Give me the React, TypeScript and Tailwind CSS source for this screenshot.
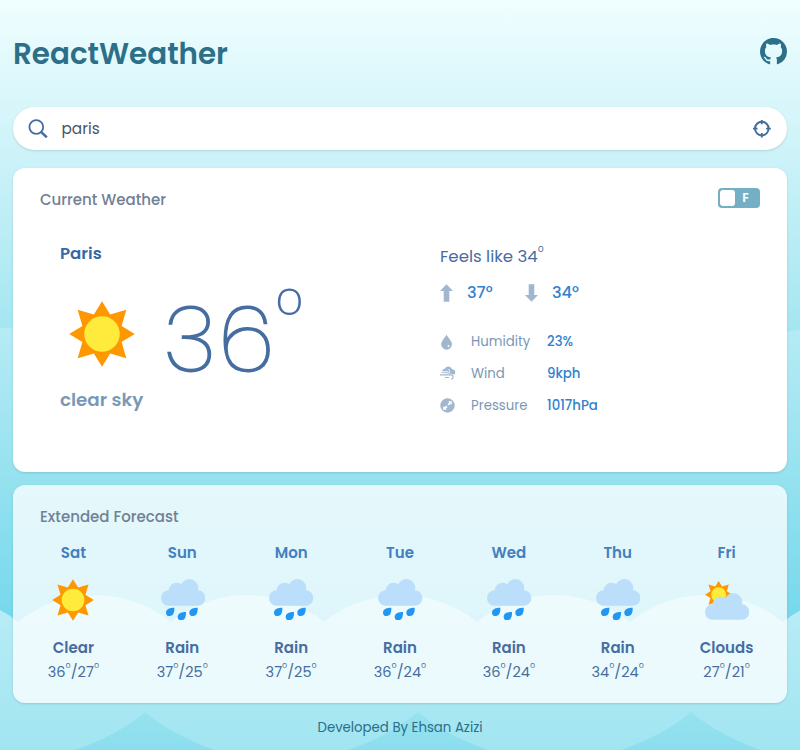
import React from "react";
import { BsGithub } from "react-icons/bs";

function Backdrop() {
  const hills = [8.5 - 273, 8.5, 281.5, 554.5, 827.5];
  const waves = [-58.5, 94.5, 247.5, 400.5, 553.5, 706.5, 859.5];
  return (
    <svg className="absolute inset-0 -z-10" width="800" height="750" viewBox="0 0 800 750" aria-hidden="true">
      <defs>
        <linearGradient id="sky" gradientUnits="userSpaceOnUse" x1="0" y1="0" x2="0" y2="400">
          <stop offset="0" stopColor="#f0feff" />
          <stop offset="1" stopColor="#94e1ee" />
        </linearGradient>
        <linearGradient id="hill" gradientUnits="userSpaceOnUse" x1="0" y1="328" x2="0" y2="620">
          <stop offset="0" stopColor="#b5ebf5" />
          <stop offset="0.5" stopColor="#96e2ef" />
          <stop offset="1" stopColor="#76d8ec" />
        </linearGradient>
        <linearGradient id="wave" gradientUnits="userSpaceOnUse" x1="0" y1="595" x2="0" y2="750">
          <stop offset="0" stopColor="#b9edf6" />
          <stop offset="1" stopColor="#a1e5f1" />
        </linearGradient>
        <linearGradient id="peak" gradientUnits="userSpaceOnUse" x1="0" y1="712" x2="0" y2="750">
          <stop offset="0" stopColor="#97e3ee" />
          <stop offset="1" stopColor="#8bddef" />
        </linearGradient>
      </defs>
      <rect width="800" height="750" fill="url(#sky)" />
      {hills.map((x) => (
        <circle key={x} cx={x} cy="545" r="217" fill="url(#hill)" />
      ))}
      {waves.map((x) => (
        <circle key={x} cx={x} cy="717" r="122" fill="url(#wave)" />
      ))}
      {[145, 418, 691].map((x) => (
        <path key={x} d={`M${x} 712 q29 24 70 38 h-140 q41 -14 70 -38z`} fill="url(#peak)" />
      ))}
    </svg>
  );
}

const rays =
  "0,-32.3 8,-19.3 24,-24 19.3,-8 32.3,0 19.3,8 24,24 8,19.3 0,32.3 -8,19.3 -24,24 -19.3,8 -32.3,0 -19.3,-8 -24,-24 -8,-19.3";

function SunShape() {
  return (
    <>
      <polygon points={rays} fill="#ff9800" />
      <circle r="17.5" fill="#ffeb3b" />
    </>
  );
}

function Sun({ size }: { size: number }) {
  return (
    <svg width={size} height={size} viewBox="-32.5 -32.5 65 65">
      <SunShape />
    </svg>
  );
}

function CloudShape() {
  return (
    <g fill="#bbdefb">
      <rect x="26" y="361" width="133" height="46" rx="23" />
      <circle cx="73" cy="362" r="24" />
      <circle cx="111" cy="354" r="27" />
      <rect x="60" y="356" width="70" height="24" />
    </g>
  );
}

function Rain() {
  return (
    <svg width="44.3" height="41" viewBox="26 327 133 123">
      <CloudShape />
      {["translate(0 0)", "translate(35 13)", "translate(70 0)"].map((t) => (
        <path
          key={t}
          transform={t}
          d="M66 413C67 424 64 438 52 438A10.500 10.500 0 0 1 41 428C41 416 54 413 66 413Z"
          fill="#2196f3"
        />
      ))}
    </svg>
  );
}

function PartlyCloudy() {
  return (
    <svg width="44.3" height="39" viewBox="524 331 133 117">
      <g transform="translate(565 372) scale(1.27)">
        <SunShape />
      </g>
      <g transform="translate(498 40)">
        <CloudShape />
      </g>
    </svg>
  );
}

function SearchIcon() {
  return (
    <svg width="20" height="20" viewBox="0 0 20 20" fill="none" stroke="#466da0">
      <circle cx="8.300" cy="8" r="6.900" strokeWidth="1.800" />
      <path d="M12.800 12.600l6 5.800" strokeWidth="2.500" />
    </svg>
  );
}

function LocateIcon() {
  return (
    <svg width="18" height="18" viewBox="0 0 18 18" fill="none" stroke="#466da0">
      <circle cx="8.800" cy="8.600" r="6.800" strokeWidth="2" />
      <path d="M8.800 -.3v4.600M8.800 12.900V17.600M-.1 8.600h4.600M13.100 8.600H17.800" strokeWidth="1.900" />
    </svg>
  );
}

function Arrow({ down = false }: { down?: boolean }) {
  return (
    <svg width="13" height="18" viewBox="0 0 13 18" fill="#a0b7ce" className={down ? "rotate-180" : ""}>
      <path d="M6.500 .3L13 7H9.300v10.700H3.700V7H0z" />
    </svg>
  );
}

function HumidityIcon() {
  return (
    <svg width="14" height="16" viewBox="0 0 14 16">
      <path d="M6.500 .5C7.700 3.500 12 7 12 10.300a5.300 5.300 0 0 1-10.800 0C1.200 7 5.300 3.500 6.500 .5z" fill="#a0b7ce" />
      <circle cx="8.500" cy="12" r="0.900" fill="#fff" />
    </svg>
  );
}

function WindIcon() {
  return (
    <svg width="16" height="15" viewBox="0 0 16 15" className="-ml-[0.500px]">
      <path
        d="M2.300 5.200C2.300 3.200 3.600 2.400 5 2.700 5.800.9 7.800.2 9.500.7c1.400.4 2.200 1.500 2.400 2.600 2 0 3.400 1.200 3.400 2.900 0 1.700-1.200 2.800-2.800 2.800H6z"
        fill="#a0b7ce"
      />
      <path
        d="M0 6.300h7.800c1.500 0 1.300-2 .1-1.900M1.500 8.900h9.500c2.600 0 2.800 4.200.2 4.200"
        fill="none"
        stroke="#fff"
        strokeWidth="2.500"
      />
      <path
        d="M1.500 6.300h6.300c1.500 0 1.300-2 .1-1.900M0 8.900h11c2.600 0 2.800 4.200.2 4.200M5 11.500h4"
        fill="none"
        stroke="#a0b7ce"
        strokeWidth="1.100"
      />
    </svg>
  );
}

function PressureIcon() {
  return (
    <svg width="15" height="15" viewBox="0 0 15 15" className="-ml-[0.500px]">
      <circle cx="7.500" cy="7.500" r="7.200" fill="#a0b7ce" />
      <path d="M4.200 10.800l2.600-2.600M8.100 6.900l2.700-2.700" stroke="#fff" strokeWidth="2" />
      <path d="M3.200 8.200v3.600h3.600zM8.200 3.200h3.600v3.600z" fill="#fff" />
    </svg>
  );
}

const days = [
  { day: "Sat", sky: "Clear", hi: 36, lo: 27 },
  { day: "Sun", sky: "Rain", hi: 37, lo: 25 },
  { day: "Mon", sky: "Rain", hi: 37, lo: 25 },
  { day: "Tue", sky: "Rain", hi: 36, lo: 24 },
  { day: "Wed", sky: "Rain", hi: 36, lo: 24 },
  { day: "Thu", sky: "Rain", hi: 34, lo: 24 },
  { day: "Fri", sky: "Clouds", hi: 27, lo: 21 },
];

const stats = [
  { label: "Humidity", value: "23%", icon: <HumidityIcon /> },
  { label: "Wind", value: "9kph", icon: <WindIcon /> },
  { label: "Pressure", value: "1017hPa", icon: <PressureIcon /> },
];

function Degree() {
  return <span className="mb-[15px] font-['Open_Sans'] text-[8.500px]">o</span>;
}

export default function App() {
  return (
    <div className="relative isolate flex h-[750px] w-[800px] flex-col overflow-hidden px-[13px] font-['Poppins','Inter',sans-serif]">
      <Backdrop />
      <header className="flex h-[107px] items-center justify-between">
        <h1 className="text-[29.4px] leading-[45px] font-semibold text-[#2c6f89]">ReactWeather</h1>
        <BsGithub className="mb-[5px] size-[27px] text-[#2c6f89]" />
      </header>

      <div className="flex h-[43px] items-center rounded-full bg-white pr-4 pl-[15px] shadow-sm">
        <SearchIcon />
        <span className="ml-[13.500px] flex-1 text-[15.300px] leading-6 text-[#4a5568]">paris</span>
        <LocateIcon />
      </div>

      <section className="mt-[18px] h-[304px] rounded-xl bg-white px-[27px] pt-5 shadow-sm">
        <div className="flex h-5 items-center justify-between">
          <h2 className="pt-[4px] text-[15px] font-medium text-[#718096]">Current Weather</h2>
          <div className="flex h-5 w-[42px] items-center rounded bg-[#74afc5] p-[2px]">
            <div className="h-4 w-[15px] rounded-[3px] bg-white" />
            <span className="flex-1 pr-[2px] text-center font-['Open_Sans'] text-[12.500px] font-bold text-white">F</span>
          </div>
        </div>
        <div className="grid grid-cols-[400px_1fr]">
          <div className="pt-[34px] pl-5">
            <p className="text-[16.6px] leading-6 font-semibold text-[#3568a6]">Paris</p>
            <div className="flex h-[120px] items-center pl-[8.500px]">
              <div className="mt-[16px]">
                <Sun size={66} />
              </div>
              <div className="ml-[29px] flex items-start text-[#466da0]">
                <span className="mt-[26px] text-[92px] leading-[96px] font-extralight tracking-[1.500px] [-webkit-text-stroke:1.900px_#466da0]">
                  36
                </span>
                <span className="mt-[7px] -ml-[1px] font-['Open_Sans'] text-[49px] leading-[48px] font-light">o</span>
              </div>
            </div>
            <p className="text-[18.300px] leading-7 font-semibold text-[#7a98b5]">clear sky</p>
          </div>
          <div className="pt-[35px]">
            <p className="flex h-7 items-center text-[16.600px] text-[#466da0]">
              Feels like 34<span className="mb-[17px] font-['Open_Sans'] text-[10px]">o</span>
            </p>
            <div className="mt-2 flex h-7 items-center text-[16.200px] font-medium text-[#3182ce]">
              <Arrow />
              <span className="ml-[14px] w-[58px]">37°</span>
              <Arrow down />
              <span className="ml-[14px]">34°</span>
            </div>
            <div className="mt-[19.500px]">
              {stats.map((s) => (
                <div key={s.label} className="flex h-[31.6px] items-center text-[13.300px]">
                  <span className="flex w-[31px] items-center">{s.icon}</span>
                  <span className="w-[76px] text-[#7a98b5]">{s.label}</span>
                  <span className="font-medium text-[#3182ce]">{s.value}</span>
                </div>
              ))}
            </div>
          </div>
        </div>
      </section>

      <section className="mt-[13px] h-[218px] rounded-xl bg-white/76 px-[6px] pt-[20px] shadow-sm">
        <h2 className="pl-[21px] text-[15px] leading-6 font-medium text-[#718096]">Extended Forecast</h2>
        <div className="mt-3 grid grid-cols-7 text-center">
          {days.map((d) => (
            <div key={d.day} className="flex flex-col items-center">
              <p className="text-[15px] leading-6 font-semibold text-[#4380c0]">{d.day}</p>
              <div className="mt-[3px] flex h-[64px] items-center justify-center">
                {d.sky === "Clear" ? (
                  <Sun size={42} />
                ) : d.sky === "Rain" ? (
                  <div className="mb-[2px] ml-[1px]">
                    <Rain />
                  </div>
                ) : (
                  <div className="ml-[1px]">
                    <PartlyCloudy />
                  </div>
                )}
              </div>
              <p className="mt-1 text-[15px] leading-6 font-semibold text-[#466da0]">{d.sky}</p>
              <p className="mt-[1px] flex h-6 items-center text-[14.500px] text-[#466da0]">
                {d.hi}
                <Degree />/{d.lo}
                <Degree />
              </p>
            </div>
          ))}
        </div>
      </section>

      <footer className="mt-[14px] text-center text-[13.300px] leading-[21px] text-[#2c6f89]">Developed By Ehsan Azizi</footer>
    </div>
  );
}
